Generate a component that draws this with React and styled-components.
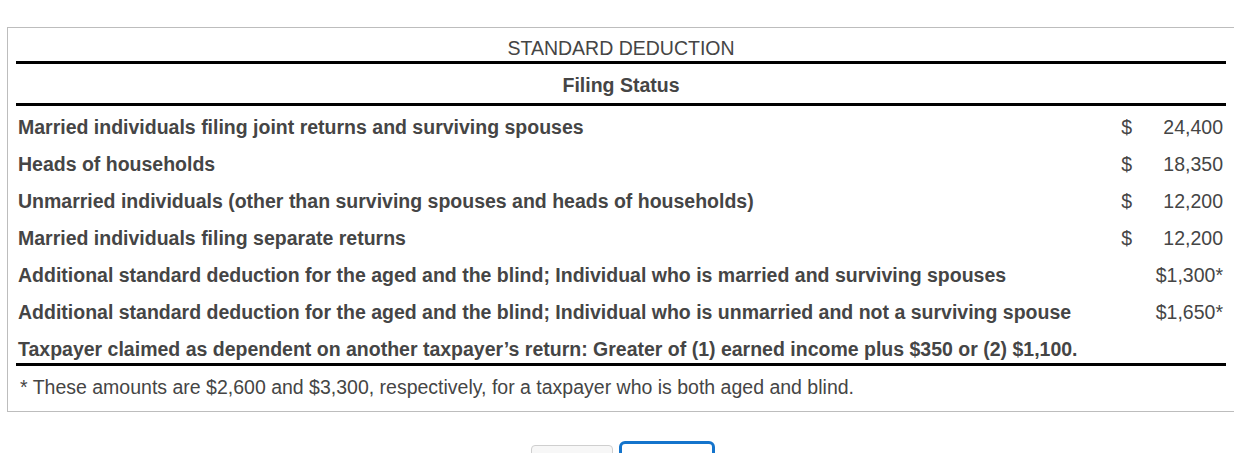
import React from 'react'
import styled, { createGlobalStyle } from 'styled-components'

const rows = [
  { label: 'Married individuals filing joint returns and surviving spouses', cur: '$', amount: '24,400' },
  { label: 'Heads of households', cur: '$', amount: '18,350' },
  { label: 'Unmarried individuals (other than surviving spouses and heads of households)', cur: '$', amount: '12,200' },
  { label: 'Married individuals filing separate returns', cur: '$', amount: '12,200' },
  { label: 'Additional standard deduction for the aged and the blind; Individual who is married and surviving spouses', amount: '$1,300*' },
  { label: 'Additional standard deduction for the aged and the blind; Individual who is unmarried and not a surviving spouse', amount: '$1,650*' },
]

const GlobalStyle = createGlobalStyle`
  body {
    margin: 0;
    background: #fff;
    font-family: 'Liberation Sans', Arial, sans-serif;
    overflow: hidden;
  }
`

export default function App() {
  return (
    <Page>
      <GlobalStyle />
      <Panel>
        <Table>
          <thead>
            <tr>
              <Caption colSpan={3}>STANDARD DEDUCTION</Caption>
            </tr>
            <tr>
              <HeadCell colSpan={3}>Filing Status</HeadCell>
            </tr>
          </thead>
          <tbody>
            {rows.map((r, i) => (
              <Row key={i}>
                <Label $fill>{r.label}</Label>
                <Cur>{r.cur}</Cur>
                <Amount>{r.amount}</Amount>
              </Row>
            ))}
            <LastRow>
              <Label colSpan={3}>
                Taxpayer claimed as dependent on another taxpayer’s return: Greater of (1) earned income plus $350 or (2) $1,100.
              </Label>
            </LastRow>
          </tbody>
        </Table>
        <Note>* These amounts are $2,600 and $3,300, respectively, for a taxpayer who is both aged and blind.</Note>
      </Panel>
      <Actions>
        <Button>&nbsp;</Button>
        <Button $primary>&nbsp;</Button>
      </Actions>
    </Page>
  )
}

const Page = styled.div`
  padding: 27px 0 0 7px;
  height: 453px;
  box-sizing: border-box;
  overflow: hidden;
`

const Panel = styled.section`
  border: 1px solid #bdbdbd;
  border-right: none;
  padding: 0 8px;
  color: #454545;
  font-size: 19.5px;
`

const Table = styled.table`
  width: 100%;
  border-collapse: collapse;

  th,
  td {
    vertical-align: bottom;
  }
`

const Caption = styled.th`
  font-weight: normal;
  text-align: center;
  height: 32px;
  padding: 0 0 1px;
  border-bottom: 3px solid #000;
`

const HeadCell = styled.th`
  font-weight: bold;
  text-align: center;
  height: 33px;
  padding: 0 0 6px;
  border-bottom: 3px solid #000;
`

const Row = styled.tr`
  height: 37px;
  font-weight: bold;

  td {
    padding-bottom: 3px;
  }
`

const LastRow = styled.tr`
  height: 38px;
  font-weight: bold;

  td {
    padding-bottom: 2px;
    border-bottom: 3px solid #000;
  }
`

const Label = styled.td`
  width: ${p => (p.$fill ? '100%' : 'auto')};
  padding: 0 0 0 2px;
  text-align: left;
`

const Cur = styled.td`
  font-weight: normal;
  min-width: 40px;
  padding: 0 20px 0 0;
  text-align: right;
  white-space: nowrap;
`

const Amount = styled.td`
  font-weight: normal;
  min-width: 70px;
  padding-right: 3px;
  text-align: right;
  white-space: nowrap;
`

const Note = styled.p`
  margin: 0;
  padding: 10px 4px 12px;
`

const Actions = styled.div`
  display: flex;
  justify-content: center;
  align-items: flex-start;
  gap: 6px;
  margin-top: 29px;
  padding-left: 4px;
`

const Button = styled.button`
  width: ${p => (p.$primary ? '96px' : '82px')};
  height: 40px;
  margin-top: ${p => (p.$primary ? '0' : '4px')};
  border-radius: ${p => (p.$primary ? '6px' : '4px')};
  border: ${p => (p.$primary ? '3px solid #1474cc' : '1px solid #cfcfcf')};
  background: ${p => (p.$primary ? '#fff' : '#f7f7f7')};
  font: inherit;
`
